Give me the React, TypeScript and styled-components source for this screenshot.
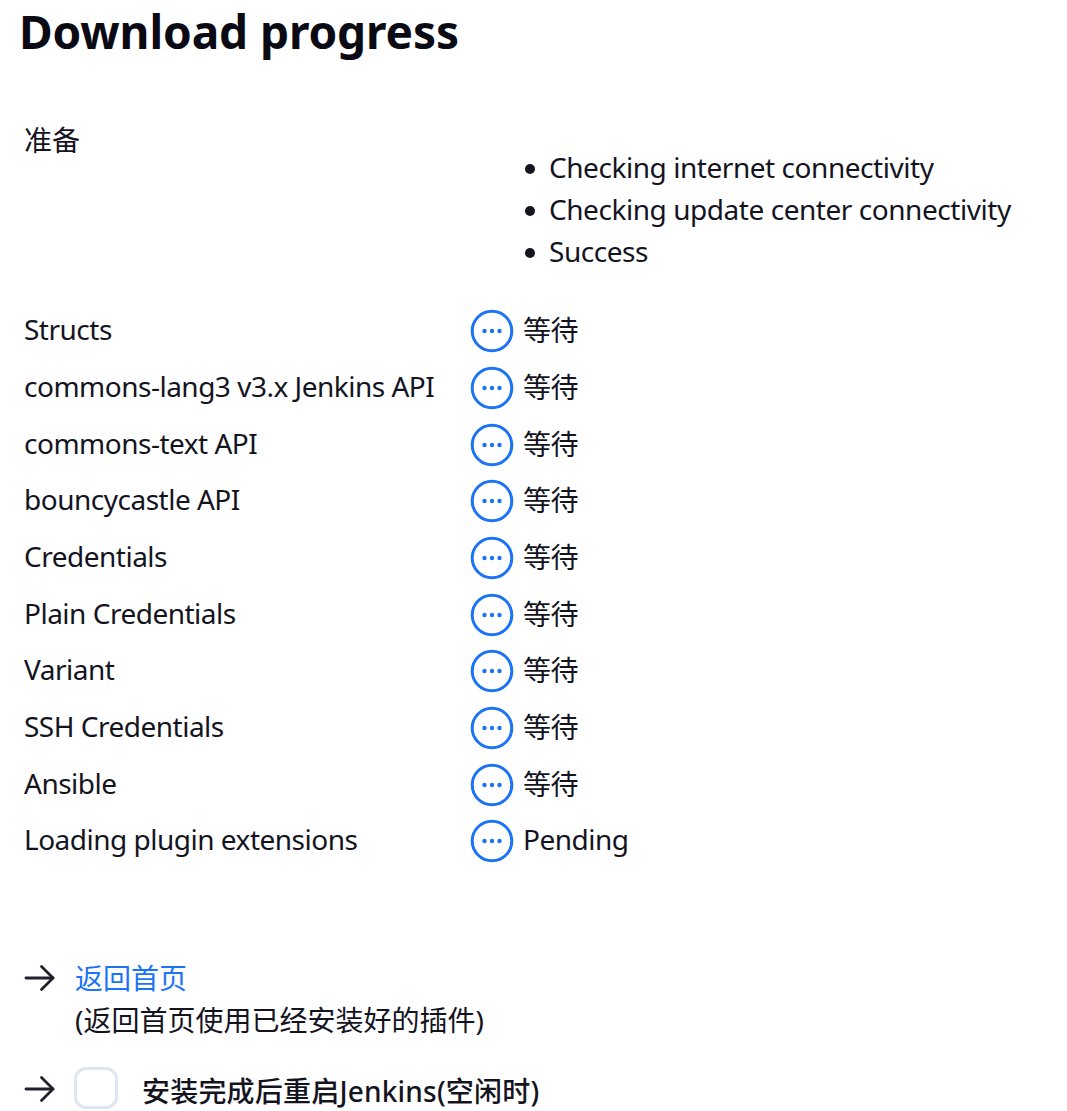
import React from 'react';
import styled, { createGlobalStyle } from 'styled-components';

const GlobalStyle = createGlobalStyle`
  html, body {
    margin: 0;
    padding: 0;
    background: #fff;
    overflow: hidden;
  }
  body {
    height: 1111px;
    font-family: 'Noto Sans', 'Noto Sans CJK SC', sans-serif;
    color: #14141f;
  }
`;
const Page = styled.div`
  padding-left: 24px;
  height: 1111px;
  overflow: hidden;
`;
const Title = styled.h1`
  margin: 0 0 0 -5px;
  font-size: 46px;
  line-height: 62px;
  font-weight: 700;
  letter-spacing: -0.1px;
  color: #0a0a14;
`;
const Prepare = styled.section`
  display: flex;
  margin-top: 53px;
  height: 173px;
`;
const PrepareLabel = styled.div`
  width: 447px;
  font-size: 28px;
  line-height: 56px;
  margin-top: -3px;
`;
const Notes = styled.ul`
  list-style: none;
  margin: 31px 0 0;
  padding-left: 54px;
  li {
    display: flex;
    align-items: center;
    font-size: 28px;
    line-height: 42px;
    letter-spacing: -0.45px;
    white-space: nowrap;
  }
  li::before {
    content: '';
    width: 10px;
    height: 10px;
    margin-right: 14px;
    margin-top: 3px;
    border-radius: 50%;
    background: #14141f;
  }
`;
const Statuses = styled.div`
  display: grid;
  grid-template-columns: 446px 1fr;
  grid-auto-rows: 56.67px;
  align-items: center;
  margin-top: 13px;
`;
const Name = styled.div`
  font-size: 28px;
  letter-spacing: -0.5px;
  white-space: nowrap;
`;
const State = styled.div`
  display: flex;
  align-items: center;
  gap: 9px;
  font-size: 28px;
  letter-spacing: -0.5px;
  svg {
    flex: none;
    margin-top: 4px;
  }
`;
const Actions = styled.div`
  margin-top: 89px;
  display: flex;
  flex-direction: column;
  gap: 26px;
`;
const Action = styled.div<{ $arrowTop: number }>`
  display: flex;
  align-items: flex-start;
  gap: 19px;
  svg {
    flex: none;
    margin-top: ${(p) => p.$arrowTop}px;
  }
`;
const Back = styled.a`
  display: block;
  color: #1b74f5;
  font-size: 28px;
  line-height: 42px;
  text-decoration: none;
`;
const Hint = styled.div`
  font-size: 28px;
  line-height: 42px;
`;
const Check = styled.span`
  display: inline-block;
  width: 44px;
  height: 42px;
  margin-left: -1px;
  box-sizing: border-box;
  border: 3px solid #dde6f2;
  border-radius: 12px;
  flex: none;
`;
const RestartRow = styled.label`
  display: flex;
  align-items: flex-start;
  gap: 24px;
  font-size: 28px;
  font-weight: 500;
  letter-spacing: 0.2px;
`;
const RestartText = styled.span`
  margin-top: 6px;
  line-height: 36px;
`;

const PendingIcon: React.FC = () => (
  <svg width="44" height="44" viewBox="0 0 44 44" fill="none">
    <circle cx="22" cy="22" r="19.8" stroke="#1b74f5" strokeWidth="3" />
    <circle cx="14.5" cy="22" r="2.2" fill="#1b74f5" />
    <circle cx="22" cy="22" r="2.2" fill="#1b74f5" />
    <circle cx="29.5" cy="22" r="2.2" fill="#1b74f5" />
  </svg>
);
const Arrow: React.FC = () => (
  <svg width="32" height="32" viewBox="0 0 32 32" fill="none" stroke="#20202c" strokeWidth="2.8" strokeLinecap="round" strokeLinejoin="round">
    <path d="M2 16h27" />
    <path d="M17.5 4.5 29 16 17.5 27.5" />
  </svg>
);

const plugins: [string, string][] = [
  ['Structs', '等待'],
  ['commons-lang3 v3.x Jenkins API', '等待'],
  ['commons-text API', '等待'],
  ['bouncycastle API', '等待'],
  ['Credentials', '等待'],
  ['Plain Credentials', '等待'],
  ['Variant', '等待'],
  ['SSH Credentials', '等待'],
  ['Ansible', '等待'],
  ['Loading plugin extensions', 'Pending'],
];

const App: React.FC = () => {
  return (
    <Page>
      <GlobalStyle />
      <Title>Download progress</Title>
      <Prepare>
        <PrepareLabel>准备</PrepareLabel>
        <Notes>
          <li>Checking internet connectivity</li>
          <li>Checking update center connectivity</li>
          <li>Success</li>
        </Notes>
      </Prepare>
      <Statuses>
        {plugins.map(([name, state]) => (
          <React.Fragment key={name}>
            <Name>{name}</Name>
            <State>
              <PendingIcon />
              {state}
            </State>
          </React.Fragment>
        ))}
      </Statuses>
      <Actions>
        <Action $arrowTop={5}>
          <Arrow />
          <div>
            <Back href="#">返回首页</Back>
            <Hint>(返回首页使用已经安装好的插件)</Hint>
          </div>
        </Action>
        <Action $arrowTop={6}>
          <Arrow />
          <RestartRow>
            <Check />
            <RestartText>安装完成后重启Jenkins(空闲时)</RestartText>
          </RestartRow>
        </Action>
      </Actions>
    </Page>
  );
};
export default App;
